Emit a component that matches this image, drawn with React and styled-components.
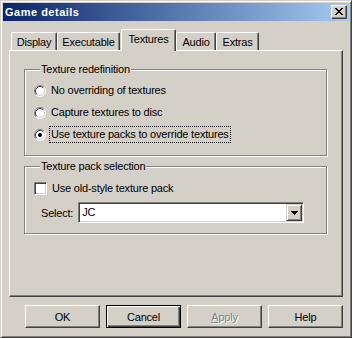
import styled, { createGlobalStyle } from 'styled-components';

// Windows classic palette
const face = '#d4d0c8';
const light = '#ffffff';
const shadow = '#808080';
const dark = '#404040';

const GlobalStyle = createGlobalStyle`
  html, body { margin: 0; padding: 0; background: ${face}; }
  body {
    font-family: "Liberation Sans", Arial, sans-serif;
    font-size: 11px;
    letter-spacing: -0.2px;
    color: #000;
  }
  * { box-sizing: border-box; }
`;

const Window = styled.div`
  width: 352px;
  height: 338px;
  display: flex;
  flex-direction: column;
  background: ${face};
  border: 1px solid;
  border-color: ${face} ${dark} ${dark} ${face};
  box-shadow: inset 1px 1px ${light}, inset -1px -1px ${shadow};
  padding: 2px;
`;

const TitleBar = styled.div`
  flex: none;
  height: 18px;
  display: flex;
  align-items: center;
  justify-content: space-between;
  padding: 0 2px;
  background: linear-gradient(to right, #0a246a, #a6caf0);
  color: #fff;
  font-weight: bold;
  letter-spacing: 0.5px;
`;

const CloseButton = styled.div`
  width: 16px;
  height: 14px;
  display: flex;
  align-items: center;
  justify-content: center;
  background: ${face};
  border: 1px solid;
  border-color: ${light} ${dark} ${dark} ${light};
  box-shadow: inset -1px -1px ${shadow};
  padding-bottom: 1px;
`;

const Body = styled.div`
  flex: 1;
  display: flex;
  flex-direction: column;
  padding: 8px 6px 7px;
`;

const TabStrip = styled.div`
  flex: none;
  height: 21px;
  display: flex;
  align-items: flex-end;
  padding-left: 2px;
`;

const Tab = styled.div`
  width: ${(p) => p.$w}px;
  margin-left: ${(p) => p.$gap || 0}px;
  height: ${(p) => (p.$active ? 22 : 18)}px;
  margin-bottom: ${(p) => (p.$active ? -1 : 0)}px;
  position: relative;
  z-index: ${(p) => (p.$active ? 1 : 0)};
  display: flex;
  align-items: center;
  justify-content: center;
  padding-bottom: ${(p) => (p.$active ? 3 : 0)}px;
  background: ${face};
  border: 1px solid;
  border-bottom: none;
  border-color: ${light} ${dark} transparent ${light};
  border-radius: 2px 2px 0 0;
  box-shadow: inset -1px 0 ${shadow};
`;

const Panel = styled.div`
  flex: 1;
  display: flex;
  flex-direction: column;
  border: 1px solid;
  border-color: ${light} ${dark} ${dark} ${light};
  box-shadow: inset -1px -1px ${shadow};
  padding: 12px 15px 0 14px;
`;

const Group = styled.fieldset`
  margin: ${(p) => p.$top || 0}px 0 0;
  padding: ${(p) => p.$pad};
  min-width: 0;
  border: 1px solid ${shadow};
  box-shadow: inset 1px 1px ${light}, 1px 1px ${light};
  display: flex;
  flex-direction: column;
  gap: 5px;
`;

const Legend = styled.legend`
  margin-left: 6px;
  padding: 0 1px;
  line-height: 13px;
  background: ${face};
`;

const OptionRow = styled.div`
  height: 17px;
  display: flex;
  align-items: center;
`;

const OptionLabel = styled.span`
  margin-left: 3px;
  padding: 0 1px;
  line-height: 15px;
  border: 1px ${(p) => (p.$focus ? 'dotted #000' : 'solid transparent')};
`;

const CheckBox = styled.span`
  width: 13px;
  height: 13px;
  flex: none;
  background: #fff;
  border: 1px solid;
  border-color: ${shadow} ${light} ${light} ${shadow};
  box-shadow: inset 1px 1px ${dark}, inset -1px -1px ${face};
`;

const SelectRow = styled.div`
  height: 21px;
  display: flex;
  align-items: center;
  gap: 5px;
  margin-left: 7px;
`;

const Combo = styled.div`
  width: 226px;
  height: 21px;
  display: flex;
  background: #fff;
  border: 1px solid;
  border-color: ${shadow} ${light} ${light} ${shadow};
  box-shadow: inset 1px 1px ${dark}, inset -1px -1px ${face};
  padding: 1px;
`;

const ComboText = styled.div`
  flex: 1;
  padding-left: 2px;
  line-height: 17px;
`;

const ComboButton = styled.div`
  width: 16px;
  display: flex;
  align-items: center;
  justify-content: center;
  background: ${face};
  border: 1px solid;
  border-color: ${face} ${dark} ${dark} ${face};
  box-shadow: inset 1px 1px ${light}, inset -1px -1px ${shadow};
`;

const ButtonRow = styled.div`
  flex: none;
  display: flex;
  justify-content: flex-end;
  gap: 6px;
  margin-top: 8px;
`;

const Button = styled.div`
  width: 75px;
  height: 23px;
  display: flex;
  align-items: center;
  justify-content: center;
  background: ${face};
  border: 1px solid;
  border-color: ${(p) => (p.$default ? '#000' : `${light} ${dark} ${dark} ${light}`)};
  box-shadow: ${(p) =>
    p.$default
      ? `inset 1px 1px ${light}, inset -1px -1px ${dark}, inset -2px -2px ${shadow}`
      : `inset -1px -1px ${shadow}`};
  color: ${(p) => (p.$disabled ? shadow : '#000')};
  text-shadow: ${(p) => (p.$disabled ? `1px 1px ${light}` : 'none')};
`;

const X_ROWS = ['11000011', '01100110', '00111100', '00011000', '00111100', '01100110', '11000011'];

const CloseGlyph = () => (
  <svg width="8" height="7" viewBox="0 0 8 7" shapeRendering="crispEdges">
    {X_ROWS.flatMap((row, y) =>
      row.split('').map((c, x) => (c === '1' ? <rect key={`${x}-${y}`} x={x} y={y} width="1" height="1" fill="#000" /> : null))
    )}
  </svg>
);

const Radio = ({ checked }) => (
  <svg width="12" height="12" viewBox="0 0 12 12" style={{ flex: 'none' }}>
    <circle cx="6" cy="6" r="5" fill="#fff" />
    <path d="M2.11 9.89 A5.5 5.5 0 0 1 9.89 2.11" fill="none" stroke={shadow} />
    <path d="M9.89 2.11 A5.5 5.5 0 0 1 2.11 9.89" fill="none" stroke={light} />
    <path d="M2.82 9.18 A4.5 4.5 0 0 1 9.18 2.82" fill="none" stroke={dark} />
    <path d="M9.18 2.82 A4.5 4.5 0 0 1 2.82 9.18" fill="none" stroke={face} />
    {checked && <circle cx="6" cy="6" r="2" fill="#000" />}
  </svg>
);

const DownArrow = () => (
  <svg width="7" height="4" viewBox="0 0 7 4" shapeRendering="crispEdges">
    <path d="M0 0h7v1h-1v1h-1v1h-1v1h-1v-1h-1v-1h-1v-1h-1z" fill="#000" />
  </svg>
);

const tabs = [
  { label: 'Display', w: 46 },
  { label: 'Executable', w: 63 },
  { label: 'Textures', w: 55, gap: 1, active: true },
  { label: 'Audio', w: 40 },
  { label: 'Extras', w: 43 },
];

const options = [
  'No overriding of textures',
  'Capture textures to disc',
  'Use texture packs to override textures',
];

const App = () => (
  <>
    <GlobalStyle />
    <Window>
      <TitleBar>
        <span>Game details</span>
        <CloseButton>
          <CloseGlyph />
        </CloseButton>
      </TitleBar>
      <Body>
        <TabStrip>
          {tabs.map((t) => (
            <Tab key={t.label} $w={t.w} $gap={t.gap} $active={t.active}>
              {t.label}
            </Tab>
          ))}
        </TabStrip>
        <Panel>
          <Group $pad="6px 9px 12px">
            <Legend>Texture redefinition</Legend>
            {options.map((o, i) => (
              <OptionRow key={o}>
                <Radio checked={i === 2} />
                <OptionLabel $focus={i === 2}>{o}</OptionLabel>
              </OptionRow>
            ))}
          </Group>
          <Group $top={4} $pad="7px 9px 10px">
            <Legend>Texture pack selection</Legend>
            <OptionRow>
              <CheckBox />
              <OptionLabel>Use old-style texture pack</OptionLabel>
            </OptionRow>
            <SelectRow>
              <span>Select:</span>
              <Combo>
                <ComboText>JC</ComboText>
                <ComboButton>
                  <DownArrow />
                </ComboButton>
              </Combo>
            </SelectRow>
          </Group>
        </Panel>
        <ButtonRow>
          <Button>OK</Button>
          <Button $default>Cancel</Button>
          <Button $disabled>
            <span>
              <u>A</u>pply
            </span>
          </Button>
          <Button>Help</Button>
        </ButtonRow>
      </Body>
    </Window>
  </>
);

export default App;
